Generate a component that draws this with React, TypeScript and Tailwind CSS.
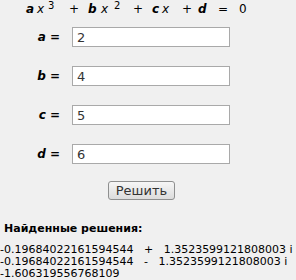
import React from 'react';

const font = { fontFamily: '"DejaVu Sans", Verdana, sans-serif' };

const fields = [
  { name: 'a', value: '2' },
  { name: 'b', value: '4' },
  { name: 'c', value: '5' },
  { name: 'd', value: '6' },
];

const roots = [
  '-0.19684022161594544   +   1.3523599121808003 i',
  '-0.19684022161594544   -   1.3523599121808003 i',
  '-1.606319556768109',
];

export default function App() {
  return (
    <div className="w-[296px] h-[280px] bg-[#f0f0f0] text-black overflow-hidden" style={font}>
      {/* уравнение */}
      <div className="flex items-baseline h-[17px] pt-[1px] text-[12px] leading-[16px]">
        <span className="w-[26px]" />
        <span className="w-[11px] font-bold italic">a</span>
        <span className="w-[10px] italic">x</span>
        <span className="w-[22px] pl-[1px] relative -top-[4px] text-[10px] leading-[10px]">3</span>
        <span className="w-[19px]">+</span>
        <span className="w-[13px] font-bold italic">b</span>
        <span className="w-[12px] italic">x</span>
        <span className="w-[20px] pl-[1px] relative -top-[4px] text-[10px] leading-[10px]">2</span>
        <span className="w-[19px]">+</span>
        <span className="w-[10px] font-bold italic">c</span>
        <span className="w-[20px] italic">x</span>
        <span className="w-[16px]">+</span>
        <span className="w-[20px] font-bold italic">d</span>
        <span className="w-[21px]">=</span>
        <span>0</span>
      </div>

      <div className="flex flex-col gap-[19px] mt-[10px]">
        {fields.map((f) => (
          <div key={f.name} className="flex items-center h-[20px]">
            <label className="w-[60px] text-right text-[12px] font-bold">
              <i>{f.name}</i> =
            </label>
            <input
              className="ml-[12px] w-[158px] h-[20px] border border-[#a9a9a9] bg-white px-[4px] text-[13px] text-[#333] outline-none"
              defaultValue={f.value}
              style={font}
            />
          </div>
        ))}
      </div>

      <div className="mt-[14px] ml-[108px]">
        <button
          className="w-[67px] h-[19px] rounded-[3px] border border-[#8e8f8f] bg-gradient-to-b from-[#f6f6f6] to-[#dcdcdc] text-[13px] leading-[15px] text-[#333]"
          style={font}
        >
          Решить
        </button>
      </div>

      <div className="mt-[20px] ml-[4px] text-[11px] font-bold leading-[13px]">Найденные решения:</div>

      <div className="mt-[9px] text-[11px] leading-[12px] whitespace-pre">
        {roots.map((r) => (
          <div key={r}>{r}</div>
        ))}
      </div>
    </div>
  );
}
